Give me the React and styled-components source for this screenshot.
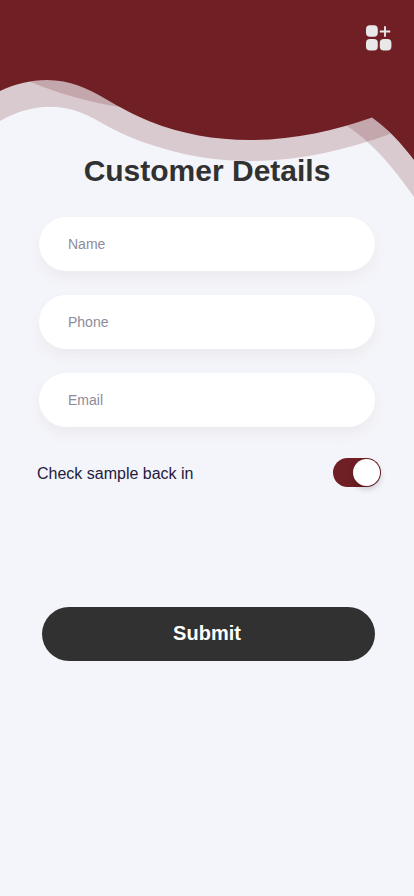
import React, { useState } from "react";
import styled, { createGlobalStyle } from "styled-components";

const GlobalStyle = createGlobalStyle`
  *, *::before, *::after { box-sizing: border-box; }
  body {
    margin: 0;
    background: #f4f5fa;
    font-family: "Liberation Sans", Arial, sans-serif;
  }
`;

const Screen = styled.main`
  position: relative;
  min-height: 896px;
  overflow: hidden;
  background: #f4f5fa;
`;

const Waves = styled.svg`
  position: absolute;
  top: 0;
  left: 0;
  width: 414px;
  height: 200px;
  display: block;
`;

const Content = styled.div`
  position: relative;
  display: flex;
  flex-direction: column;
`;

const TopBar = styled.header`
  display: flex;
  justify-content: flex-end;
  height: 153px;
  padding: 24px 22px 0 0;
`;

const IconButton = styled.button`
  width: 27px;
  height: 27px;
  padding: 0;
  border: 0;
  background: none;

  svg { display: block; }
`;

const Title = styled.h1`
  margin: 0;
  color: #313131;
  font-size: 30px;
  font-weight: 700;
  line-height: 36px;
  text-align: center;
`;

const Form = styled.form`
  display: flex;
  flex-direction: column;
  padding: 28px 39px 0;
`;

const Fields = styled.div`
  display: flex;
  flex-direction: column;
  gap: 24px;
`;

const Field = styled.input`
  width: 100%;
  height: 54px;
  padding: 0 29px;
  border: 0;
  border-radius: 27px;
  outline: none;
  background: #fff;
  box-shadow: 0 7px 14px rgba(112, 32, 37, 0.05);
  color: #1f1a3d;
  font: 14px "Liberation Sans", Arial, sans-serif;

  &::placeholder { color: #8d8b9a; opacity: 1; }
`;

const ToggleRow = styled.div`
  display: flex;
  align-items: center;
  justify-content: space-between;
  height: 29px;
  margin: 31px -6px 0 -2px;
`;

const ToggleLabel = styled.span`
  color: #1f1a3d;
  font-size: 16px;
  line-height: 20px;
  transform: translateY(1px);
`;

const Toggle = styled.button`
  display: flex;
  align-items: center;
  justify-content: ${({ $on }) => ($on ? "flex-end" : "flex-start")};
  width: 48px;
  height: 29px;
  padding: 1px;
  border: 0;
  border-radius: 15px;
  background: ${({ $on }) => ($on ? "#702025" : "#c9c9cf")};
`;

const Knob = styled.span`
  width: 27px;
  height: 27px;
  border-radius: 50%;
  background: #fff;
  box-shadow: 0 3px 6px rgba(0, 0, 0, 0.2);
`;

const Submit = styled.button`
  height: 54px;
  margin: 120px 0 0 3px;
  padding: 0 3px 2px 0;
  border: 0;
  border-radius: 27px;
  background: #313131;
  color: #fff;
  font: 700 20px "Liberation Sans", Arial, sans-serif;
`;

function HeaderWaves() {
  return (
    <Waves viewBox="0 0 414 200" aria-hidden="true">
      <g fill="#702025">
        <path
          fillOpacity="0.2"
          d="M0 80V121C16 112 32 106.7 50 106.7C70 106.7 84 113 100 122C122 134.5 140 142 165 149C192 157 220 161 250 161C300 161 347 149.5 390 134L372 80Z"
        />
        <path fillOpacity="0.2" d="M26 80C56 93 88 102 122 107.3L140 70Z" />
        <path fillOpacity="0.2" d="M345 124.5C372 142 393 167 414 197V110H360Z" />
      </g>
      <path
        fill="#702025"
        d="M0 0V91C15 84 30 80 47 80C70 80 88 88.5 104 98C122 108.5 134 115 150 121.5C182 134 214 140 250 140C294 140 333 131 372 117.5C387 128 401 143 414 160V0Z"
      />
    </Waves>
  );
}

function AddTileIcon() {
  return (
    <svg width="27" height="27" viewBox="0 0 27 27" aria-hidden="true">
      <g fill="#e8e8e8">
        <rect x="1" y="1.2" width="11.8" height="11.6" rx="4" />
        <rect x="1" y="15" width="11.8" height="11.6" rx="4" />
        <rect x="14.8" y="15" width="11.6" height="11.6" rx="4" />
      </g>
      <path d="M20 2.3v10.4M14.8 7.5h10.4" stroke="#e8e8e8" strokeWidth="1.9" fill="none" />
    </svg>
  );
}

export default function App() {
  const [backIn, setBackIn] = useState(true);

  return (
    <>
      <GlobalStyle />
      <Screen>
        <HeaderWaves />
        <Content>
          <TopBar>
            <IconButton aria-label="Add">
              <AddTileIcon />
            </IconButton>
          </TopBar>
          <Title>Customer Details</Title>
          <Form onSubmit={(e) => e.preventDefault()}>
            <Fields>
              <Field placeholder="Name" />
              <Field placeholder="Phone" type="tel" />
              <Field placeholder="Email" type="email" />
            </Fields>
            <ToggleRow>
              <ToggleLabel>Check sample back in</ToggleLabel>
              <Toggle
                type="button"
                role="switch"
                aria-label="Check sample back in"
                aria-checked={backIn}
                $on={backIn}
                onClick={() => setBackIn(!backIn)}
              >
                <Knob />
              </Toggle>
            </ToggleRow>
            <Submit type="submit">Submit</Submit>
          </Form>
        </Content>
      </Screen>
    </>
  );
}
